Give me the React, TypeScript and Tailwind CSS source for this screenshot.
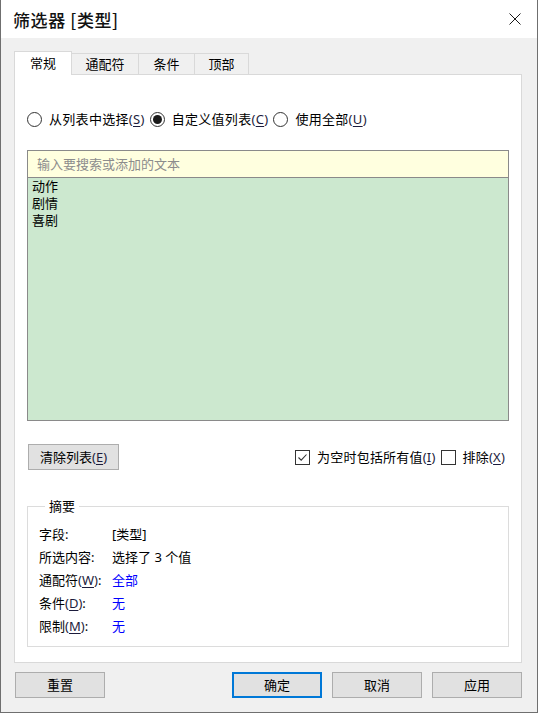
import type { ReactNode } from "react";

const font = "font-['Noto_Sans','Noto_Sans_CJK_SC',sans-serif]";

type KeyProps = { k: string };

function Key({ k }: KeyProps) {
  return (
    <span className="text-[#1c1c3c]">
      (<span className="underline underline-offset-2">{k}</span>)
    </span>
  );
}

type RadioProps = { label: string; k: string; checked?: boolean };

function Radio({ label, k, checked }: RadioProps) {
  return (
    <label className="flex items-center gap-[7px]">
      <span className="flex h-[15px] w-[15px] items-center justify-center rounded-full border border-[#333333] bg-white">
        {checked && <span className="h-[9px] w-[9px] rounded-full bg-[#1a1a1a]" />}
      </span>
      <span className="tracking-[0.3px]">
        {label}
        <Key k={k} />
      </span>
    </label>
  );
}

type CheckProps = { label: string; k: string; checked?: boolean };

function Check({ label, k, checked }: CheckProps) {
  return (
    <label className="flex items-center gap-[7px]">
      <span className="flex h-[15px] w-[15px] items-center justify-center border border-[#333333] bg-white">
        {checked && (
          <svg width="13" height="13" viewBox="0 0 13 13" fill="none">
            <path d="M2.5 6.5 L5.2 9.2 L10.5 3.5" stroke="#333333" strokeWidth="1.1" />
          </svg>
        )}
      </span>
      <span className="tracking-[0.2px]">
        {label}
        <Key k={k} />
      </span>
    </label>
  );
}

type ButtonProps = { children: ReactNode; primary?: boolean; className?: string };

function Button({ children, primary, className = "" }: ButtonProps) {
  return (
    <button
      className={`flex h-[26px] items-center justify-center bg-[#e1e1e1] ${
        primary ? "border-2 border-[#0078d7]" : "border border-[#adadad]"
      } ${className}`}
    >
      {children}
    </button>
  );
}

const tabs = [
  { name: "通配符", w: "w-[67px]" },
  { name: "条件", w: "w-[56px]" },
  { name: "顶部", w: "w-[54px]" },
];

const values = ["动作", "剧情", "喜剧"];

export default function App() {
  return (
    <div
      className={`${font} flex h-[713px] w-[538px] flex-col border-x border-b border-[#6f6f6f] text-[13px] leading-[17px] text-black`}
    >
      {/* title bar */}
      <div className="flex h-[38px] items-center justify-between bg-white pl-[12px] pr-[16px]">
        <span className="font-['Noto_Sans_CJK_SC',sans-serif] text-[17px] font-medium tracking-[0.6px] text-[#111]">
          筛选器 [类型]
        </span>
        <svg width="12" height="12" viewBox="0 0 12 12" fill="none">
          <path d="M0.5 0.5 L11.5 11.5 M11.5 0.5 L0.5 11.5" stroke="#1a1a1a" strokeWidth="1" />
        </svg>
      </div>

      <div className="flex flex-1 flex-col bg-[#f0f0f0] pl-[13px] pt-[13px]">
        {/* tabs */}
        <div className="flex h-[23px] items-end">
          <div className="relative z-10 -mb-px flex h-[24px] w-[58px] items-center justify-center border-x border-t border-[#d9d9d9] bg-white">
            常规
          </div>
          {tabs.map((tab) => (
            <div
              key={tab.name}
              className={`flex h-[21px] ${tab.w} items-center justify-center border-r border-t border-[#d9d9d9] bg-[#f0f0f0]`}
            >
              {tab.name}
            </div>
          ))}
        </div>

        <div className="flex h-[589px] w-[508px] flex-col border border-[#d9d9d9] bg-white px-[12px] pt-[36px]">
          <div className="flex h-[17px] items-center gap-[5px]">
            <Radio label="从列表中选择" k="S" />
            <Radio label="自定义值列表" k="C" checked />
            <Radio label="使用全部" k="U" />
          </div>

          <div className="mt-[22px] flex h-[271px] flex-col border border-[#8a8a8a]">
            <div className="flex h-[27px] items-center border-b border-[#8a8a8a] bg-[#ffffdf] pl-[9px] text-[#8c8c8c]">
              输入要搜索或添加的文本
            </div>
            <div className="flex-1 bg-[#cce8cf] pl-[4px]">
              {values.map((v) => (
                <div key={v} className="h-[17px] leading-[16px]">
                  {v}
                </div>
              ))}
            </div>
          </div>

          <div className="mt-[23px] flex items-center justify-between">
            <Button className="ml-px w-[91px]">
              清除列表
              <Key k="E" />
            </Button>
            <div className="mr-[4px] flex items-center gap-[5px]">
              <Check label="为空时包括所有值" k="I" checked />
              <Check label="排除" k="X" />
            </div>
          </div>

          <fieldset className="mt-[28px] border border-[#dcdcdc] pb-[11px] pl-[11px] pt-[11px]">
            <legend className="ml-[6px] px-[4px]">摘要</legend>
            <div className="flex flex-col gap-[6px]">
              <Row label={<>字段:</>}>[类型]</Row>
              <Row label={<>所选内容:</>}>选择了 3 个值</Row>
              <Row label={<>通配符<Key k="W" />:</>}>
                <span className="text-[#0000ff]">全部</span>
              </Row>
              <Row label={<>条件<Key k="D" />:</>}>
                <span className="text-[#0000ff]">无</span>
              </Row>
              <Row label={<>限制<Key k="M" />:</>}>
                <span className="text-[#0000ff]">无</span>
              </Row>
            </div>
          </fieldset>
        </div>

        {/* dialog buttons */}
        <div className="ml-px mt-[9px] flex w-[507px]">
          <Button className="w-[90px]">重置</Button>
          <div className="ml-auto flex gap-[10px]">
            <Button primary className="w-[90px]">
              确定
            </Button>
            <Button className="w-[90px]">取消</Button>
            <Button className="w-[90px]">应用</Button>
          </div>
        </div>
      </div>
    </div>
  );
}

function Row({ label, children }: { label: ReactNode; children: ReactNode }) {
  return (
    <div className="flex">
      <span className="w-[73px] shrink-0">{label}</span>
      <span>{children}</span>
    </div>
  );
}
